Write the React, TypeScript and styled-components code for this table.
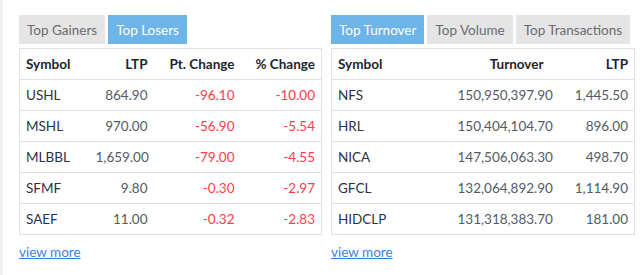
import React from "react";
import styled, { createGlobalStyle } from "styled-components";

const GlobalStyle = createGlobalStyle`
  html, body {
    margin: 0;
    padding: 0;
    background: #eef0f4;
  }
  body {
    font-family: Lato, "Noto Sans", sans-serif;
  }
`;

const Page = styled.div`
  margin-left: 3px;
  height: 275px;
  background: #ffffff;
  padding: 15px 8px 0 16px;
  display: flex;
  gap: 10px;
  box-sizing: border-box;
`;

const Panel = styled.div<{ $width: number }>`
  width: ${(p) => p.$width}px;
  display: flex;
  flex-direction: column;
`;

const Tabs = styled.div`
  display: flex;
  gap: 3px;
  margin-bottom: 4px;
`;

const Tab = styled.button<{ $active?: boolean }>`
  flex-shrink: 0;
  white-space: nowrap;
  height: 29px;
  padding: 0 8px;
  border: none;
  font-family: inherit;
  font-size: 13.5px;
  background: ${(p) => (p.$active ? "#6db4e8" : "#e5e5e5")};
  color: ${(p) => (p.$active ? "#ffffff" : "#6b6b6b")};
  cursor: pointer;
`;

const Table = styled.table`
  width: 100%;
  border-collapse: collapse;
  table-layout: fixed;
  border: 1px solid #dfe1e6;
  font-size: 13.5px;
`;

const Th = styled.th<{ $align?: string }>`
  height: 30px;
  padding: 0 6px;
  text-align: ${(p) => p.$align || "left"};
  font-weight: 700;
  color: #1f2430;
  border-bottom: 1px solid #dfe1e6;
`;

const Td = styled.td<{ $align?: string; $tone?: "sym" | "num" | "neg" }>`
  height: 30px;
  padding: 0 6px;
  text-align: ${(p) => p.$align || "left"};
  border-bottom: 1px solid #dfe1e6;
  color: ${(p) =>
    p.$tone === "neg" ? "#ff3b4e" : p.$tone === "num" ? "#555a63" : "#2c3244"};
`;

const ViewMore = styled.a`
  display: inline-block;
  margin-top: 9px;
  font-size: 13.5px;
  color: #3b7fe0;
  text-decoration: underline;
  align-self: flex-start;
`;

const losers = [
  ["USHL", "864.90", "-96.10", "-10.00"],
  ["MSHL", "970.00", "-56.90", "-5.54"],
  ["MLBBL", "1,659.00", "-79.00", "-4.55"],
  ["SFMF", "9.80", "-0.30", "-2.97"],
  ["SAEF", "11.00", "-0.32", "-2.83"],
];

const turnover = [
  ["NFS", "150,950,397.90", "1,445.50"],
  ["HRL", "150,404,104.70", "896.00"],
  ["NICA", "147,506,063.30", "498.70"],
  ["GFCL", "132,064,892.90", "1,114.90"],
  ["HIDCLP", "131,318,383.70", "181.00"],
];

export default function App() {
  return (
    <>
      <GlobalStyle />
      <Page>
        <Panel $width={302}>
          <Tabs>
            <Tab>Top Gainers</Tab>
            <Tab $active>Top Losers</Tab>
          </Tabs>
          <Table>
            <colgroup>
              <col style={{ width: 70 }} />
              <col style={{ width: 64 }} />
              <col style={{ width: 87 }} />
              <col style={{ width: 81 }} />
            </colgroup>
            <thead>
              <tr>
                <Th>Symbol</Th>
                <Th $align="right">LTP</Th>
                <Th $align="right">Pt. Change</Th>
                <Th $align="right">% Change</Th>
              </tr>
            </thead>
            <tbody>
              {losers.map((r) => (
                <tr key={r[0]}>
                  <Td $tone="sym">{r[0]}</Td>
                  <Td $align="right" $tone="num">{r[1]}</Td>
                  <Td $align="right" $tone="neg">{r[2]}</Td>
                  <Td $align="right" $tone="neg">{r[3]}</Td>
                </tr>
              ))}
            </tbody>
          </Table>
          <ViewMore href="#">view more</ViewMore>
        </Panel>
        <Panel $width={303}>
          <Tabs>
            <Tab $active>Top Turnover</Tab>
            <Tab>Top Volume</Tab>
            <Tab>Top Transactions</Tab>
          </Tabs>
          <Table>
            <colgroup>
              <col style={{ width: 120 }} />
              <col style={{ width: 98 }} />
              <col style={{ width: 85 }} />
            </colgroup>
            <thead>
              <tr>
                <Th>Symbol</Th>
                <Th $align="right">Turnover</Th>
                <Th $align="right">LTP</Th>
              </tr>
            </thead>
            <tbody>
              {turnover.map((r) => (
                <tr key={r[0]}>
                  <Td $tone="sym">{r[0]}</Td>
                  <Td $align="right" $tone="num">{r[1]}</Td>
                  <Td $align="right" $tone="num">{r[2]}</Td>
                </tr>
              ))}
            </tbody>
          </Table>
          <ViewMore href="#">view more</ViewMore>
        </Panel>
      </Page>
    </>
  );
}
